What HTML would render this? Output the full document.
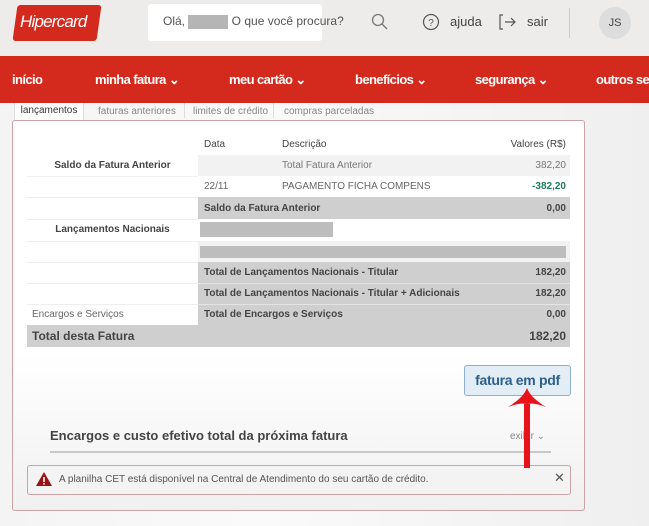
<!DOCTYPE html>
<html><head><meta charset="utf-8"><style>
*{margin:0;padding:0;box-sizing:border-box}
body{width:649px;height:526px;overflow:hidden;font-family:"Liberation Sans",sans-serif;background:linear-gradient(90deg,#f4f4f4,#fafafa 40%,#efefef);position:relative;color:#444}
.a{position:absolute;white-space:nowrap}
.hdr{left:0;top:0;width:649px;height:56px;background:#eeecea}
.nav{left:0;top:56px;width:649px;height:47px;background:#d42a1d;color:#fff;font-size:13px;font-weight:bold;overflow:hidden}
.nav span{position:absolute;top:16px;letter-spacing:-0.6px;white-space:nowrap}
.cell{position:absolute;font-size:10px;line-height:21px;white-space:nowrap}
.b{font-weight:bold}
</style></head><body>
<div class="a hdr"></div>
<div class="a" style="left:15px;top:5px;width:84px;height:36px;background:#d42a1d;transform:skewX(-8deg);border-radius:3px"></div>
<div class="a" style="left:20px;top:12px;color:#fff;font-size:17px;font-style:italic;letter-spacing:-0.8px">Hipercard</div>
<div class="a" style="left:148px;top:4px;width:174px;height:37px;background:#fff;border-radius:3px"></div>
<div class="a" style="left:163px;top:14px;font-size:12px;color:#555">Olá, <span style="display:inline-block;width:40px;height:14px;background:#b5b5b5;vertical-align:middle"></span> O que você procura?</div>
<svg class="a" style="left:371px;top:13px" width="18" height="18"><circle cx="7" cy="7" r="5.5" fill="none" stroke="#777" stroke-width="1.3"/><path d="M11 11l5 5" stroke="#777" stroke-width="1.3"/></svg>
<svg class="a" style="left:422px;top:13px" width="18" height="18"><circle cx="9" cy="9" r="7.5" fill="none" stroke="#555" stroke-width="1.2"/><text x="9" y="13" font-size="10" text-anchor="middle" fill="#555" font-family="Liberation Sans">?</text></svg>
<div class="a" style="left:450px;top:14px;font-size:13px;color:#444">ajuda</div>
<svg class="a" style="left:498px;top:13px" width="20" height="18"><path d="M5 2H2v14h3M7 9h10M13 5l4 4-4 4" fill="none" stroke="#555" stroke-width="1.2"/></svg>
<div class="a" style="left:527px;top:14px;font-size:13px;color:#444">sair</div>
<div class="a" style="left:569px;top:8px;width:1px;height:30px;background:#ccc"></div>
<div class="a" style="left:599px;top:7px;width:32px;height:32px;border-radius:50%;background:#ddd;font-size:11px;text-align:center;line-height:32px;color:#444">JS</div>
<div class="a nav"><span style="left:12px">início</span><span style="left:95px">minha fatura ⌄</span><span style="left:229px">meu cartão ⌄</span><span style="left:355px">benefícios ⌄</span><span style="left:475px">segurança ⌄</span><span style="left:596px">outros serviços</span></div>
<div class="a" style="left:14px;top:103px;width:70px;height:19px;background:#fff;border:1px solid #ddd;border-top:0;font-size:10px;line-height:16px;text-align:center;color:#333">lançamentos</div>
<div class="a" style="left:98px;top:106px;font-size:10px;color:#888">faturas anteriores</div>
<div class="a" style="left:184px;top:103px;width:1px;height:15px;background:#ddd"></div>
<div class="a" style="left:193px;top:106px;font-size:10px;color:#888">limites de crédito</div>
<div class="a" style="left:273px;top:103px;width:1px;height:15px;background:#ddd"></div>
<div class="a" style="left:284px;top:106px;font-size:10px;color:#888">compras parceladas</div>
<div class="a" style="left:12px;top:120px;width:573px;height:391px;border:1px solid #c9a3a8;border-radius:3px;background:linear-gradient(#fff,#fff 60%,#f0f0f0)"></div>
<div class="a" style="left:198px;top:155px;width:372px;height:21px;background:#f2f2f2"></div>
<div class="a" style="left:198px;top:197px;width:372px;height:22px;background:#cfcfcf"></div>
<div class="a" style="left:200px;top:222px;width:133px;height:15px;background:#bdbdbd"></div>
<div class="a" style="left:198px;top:241px;width:372px;height:21px;background:#f2f2f2"></div>
<div class="a" style="left:200px;top:246px;width:366px;height:12px;background:#bdbdbd"></div>
<div class="a" style="left:198px;top:262px;width:372px;height:63px;background:#cfcfcf"></div>
<div class="a" style="left:198px;top:283px;width:372px;height:1px;background:#e4e4e4"></div>
<div class="a" style="left:198px;top:304px;width:372px;height:1px;background:#e4e4e4"></div>
<div class="a" style="left:27px;top:325px;width:543px;height:22px;background:#cfcfcf"></div>
<div class="a" style="left:27px;top:176px;width:171px;height:1px;background:#eee"></div>
<div class="a" style="left:27px;top:197px;width:171px;height:1px;background:#eee"></div>
<div class="a" style="left:27px;top:219px;width:171px;height:1px;background:#eee"></div>
<div class="a" style="left:27px;top:241px;width:171px;height:1px;background:#eee"></div>
<div class="a" style="left:27px;top:262px;width:171px;height:1px;background:#eee"></div>
<div class="a" style="left:27px;top:283px;width:171px;height:1px;background:#eee"></div>
<div class="a" style="left:27px;top:304px;width:171px;height:1px;background:#eee"></div>
<div class="cell" style="left:204px;top:134px">Data</div>
<div class="cell" style="left:282px;top:134px">Descrição</div>
<div class="cell" style="left:500px;top:134px;width:66px;text-align:right">Valores (R$)</div>
<div class="cell b" style="left:27px;top:155px;width:171px;text-align:center">Saldo da Fatura Anterior</div>
<div class="cell" style="left:282px;top:155px;color:#777">Total Fatura Anterior</div>
<div class="cell" style="left:500px;top:155px;width:66px;text-align:right;color:#777">382,20</div>
<div class="cell" style="left:204px;top:176px;color:#666">22/11</div>
<div class="cell" style="left:282px;top:176px;color:#666">PAGAMENTO FICHA COMPENS</div>
<div class="cell b" style="left:500px;top:176px;width:66px;text-align:right;color:#1d7d5a">-382,20</div>
<div class="cell b" style="left:204px;top:198px">Saldo da Fatura Anterior</div>
<div class="cell b" style="left:500px;top:198px;width:66px;text-align:right">0,00</div>
<div class="cell b" style="left:27px;top:219px;width:171px;text-align:center">Lançamentos Nacionais</div>
<div class="cell b" style="left:204px;top:262px">Total de Lançamentos Nacionais - Titular</div>
<div class="cell b" style="left:500px;top:262px;width:66px;text-align:right">182,20</div>
<div class="cell b" style="left:204px;top:283px">Total de Lançamentos Nacionais - Titular + Adicionais</div>
<div class="cell b" style="left:500px;top:283px;width:66px;text-align:right">182,20</div>
<div class="cell" style="left:32px;top:304px;color:#666">Encargos e Serviços</div>
<div class="cell b" style="left:204px;top:304px">Total de Encargos e Serviços</div>
<div class="cell b" style="left:500px;top:304px;width:66px;text-align:right">0,00</div>
<div class="cell b" style="left:32px;top:325px;font-size:12px;line-height:22px">Total desta Fatura</div>
<div class="cell b" style="left:480px;top:325px;width:86px;text-align:right;font-size:12px;line-height:22px">182,20</div>
<div class="a" style="left:464px;top:365px;width:107px;height:31px;background:#e3edf5;border:1px solid #8fb0cc;border-radius:3px;color:#2a5f8e;font-size:14px;font-weight:bold;text-align:center;line-height:29px;letter-spacing:-0.3px">fatura em pdf</div>
<div class="a" style="left:50px;top:428px;font-size:13px;font-weight:bold;color:#444">Encargos e custo efetivo total da próxima fatura</div>
<div class="a" style="left:510px;top:431px;font-size:10px;color:#888">exibir ⌄</div>
<div class="a" style="left:50px;top:451px;width:501px;height:2px;background:#c8c8c8"></div>
<div class="a" style="left:27px;top:465px;width:544px;height:30px;border:1px solid #c9a3a8;border-radius:3px;background:#f3f3f3"></div>
<svg class="a" style="left:35px;top:471px" width="18" height="16"><path d="M9 1L17 15H1Z" fill="#9b1414"/><rect x="8.2" y="6" width="1.6" height="5" fill="#fff"/><rect x="8.2" y="12" width="1.6" height="1.6" fill="#fff"/></svg>
<div class="a" style="left:59px;top:474px;font-size:10px;color:#555">A planilha CET está disponível na Central de Atendimento do seu cartão de crédito.</div>
<div class="a" style="left:554px;top:470px;font-size:13px;color:#555">✕</div>
<div class="a" style="left:524px;top:404px;width:6px;height:64px;background:#e8121a"></div>
<svg class="a" style="left:508px;top:388px" width="38" height="24"><path d="M19 0C22 8 30 14 38 19C30 16 25 15 19 16C13 15 8 16 0 19C8 14 16 8 19 0Z" fill="#e8121a"/></svg>
</body></html>
